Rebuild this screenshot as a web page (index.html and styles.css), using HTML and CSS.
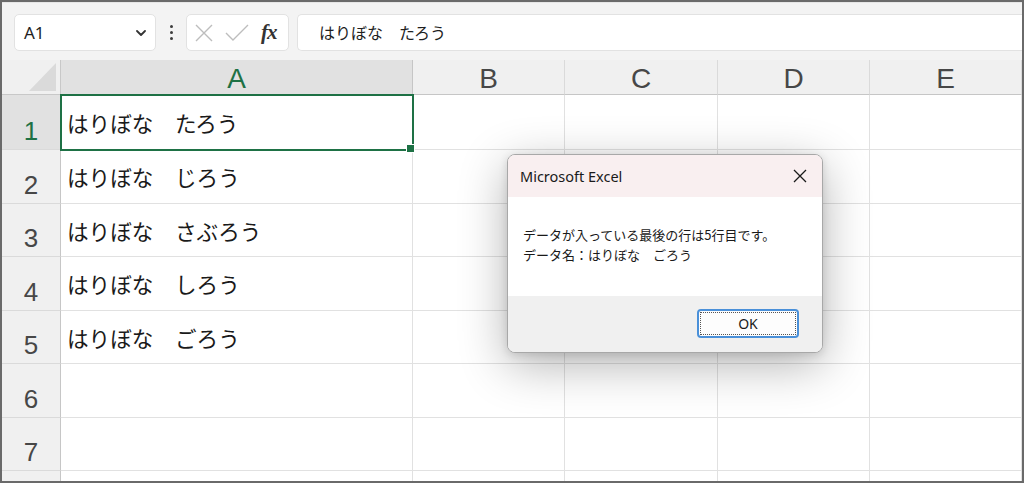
FILE: index.html
```html
<!DOCTYPE html>
<html lang="ja">
<head>
<meta charset="utf-8">
<title>Excel</title>
<link rel="stylesheet" href="styles.css">
</head>
<body>
<div class="frame">
  <div class="formula-bar">
    <div class="name-box">
      <span class="name-text">A1</span>
      <svg class="chev" width="10" height="6" viewBox="0 0 10 6"><path d="M1 1 L5 5 L9 1" fill="none" stroke="#333" stroke-width="1.8" stroke-linecap="round" stroke-linejoin="round"/></svg>
    </div>
    <div class="dots"><i></i><i></i><i></i></div>
    <div class="fx-buttons">
      <svg class="ico-x" width="18" height="18" viewBox="0 0 18 18"><path d="M1 1 L17 17 M17 1 L1 17" stroke="#bdbdbd" stroke-width="1.4" fill="none"/></svg>
      <svg class="ico-check" width="24" height="18" viewBox="0 0 24 18"><path d="M1 9 L8 16 L23 1" stroke="#bdbdbd" stroke-width="1.4" fill="none"/></svg>
      <span class="fx"><i>f</i><i>x</i></span>
    </div>
    <div class="formula-input">はりぼな　たろう</div>
  </div>

  <div class="sheet">
    <div class="grid">
      <div class="corner"><div class="tri"></div></div>
      <div class="ch sel-h">A</div>
      <div class="ch">B</div>
      <div class="ch">C</div>
      <div class="ch">D</div>
      <div class="ch">E</div>

      <div class="rh sel-h">1</div>
      <div class="cell a1">はりぼな　たろう</div>
      <div class="cell"></div><div class="cell"></div><div class="cell"></div><div class="cell"></div>

      <div class="rh">2</div>
      <div class="cell">はりぼな　じろう</div>
      <div class="cell"></div><div class="cell"></div><div class="cell"></div><div class="cell"></div>

      <div class="rh">3</div>
      <div class="cell">はりぼな　さぶろう</div>
      <div class="cell"></div><div class="cell"></div><div class="cell"></div><div class="cell"></div>

      <div class="rh">4</div>
      <div class="cell">はりぼな　しろう</div>
      <div class="cell"></div><div class="cell"></div><div class="cell"></div><div class="cell"></div>

      <div class="rh">5</div>
      <div class="cell">はりぼな　ごろう</div>
      <div class="cell"></div><div class="cell"></div><div class="cell"></div><div class="cell"></div>

      <div class="rh">6</div>
      <div class="cell"></div>
      <div class="cell"></div><div class="cell"></div><div class="cell"></div><div class="cell"></div>

      <div class="rh">7</div>
      <div class="cell"></div>
      <div class="cell"></div><div class="cell"></div><div class="cell"></div><div class="cell"></div>

      <div class="rh"></div>
      <div class="cell"></div>
      <div class="cell"></div><div class="cell"></div><div class="cell"></div><div class="cell"></div>
    </div>

    <div class="dialog">
      <div class="dlg-title">
        <span>Microsoft Excel</span>
        <svg class="dlg-close" width="14" height="14" viewBox="0 0 14 14"><path d="M1 1 L13 13 M13 1 L1 13" stroke="#1a1a1a" stroke-width="1.3" fill="none"/></svg>
      </div>
      <div class="dlg-body">
        <div>データが入っている最後の行は5行目です。</div>
        <div>データ名：はりぼな　ごろう</div>
      </div>
      <div class="dlg-foot">
        <button class="ok"><span>OK</span></button>
      </div>
    </div>
  </div>
</div>
</body>
</html>
```

FILE: styles.css
```css
* { box-sizing: border-box; }
html, body { margin: 0; padding: 0; }
body {
  width: 1024px;
  height: 483px;
  overflow: hidden;
  font-family: "Noto Sans", "Noto Sans CJK JP", sans-serif;
  background: #ffffff;
}
.frame {
  width: 1024px;
  height: 483px;
  border: 2px solid #6a6a6a;
  background: #f3f3f3;
  display: flex;
  flex-direction: column;
  overflow: hidden;
}
.formula-bar {
  height: 58px;
  flex: none;
  display: flex;
  align-items: flex-start;
  padding-top: 11px;
  padding-left: 12px;
  border-top: 1px solid #e6e6e6;
}
.name-box {
  width: 142px;
  height: 37px;
  background: #fff;
  border: 1px solid #e2e2e2;
  border-radius: 5px;
  display: flex;
  align-items: center;
  justify-content: space-between;
  padding: 0 9px 0 9px;
}
.name-text {
  font-family: "Noto Sans", sans-serif;
  font-size: 17px;
  color: #1f1f1f;
}
.chev { margin-top: 1px; }
.dots {
  width: 30px;
  height: 37px;
  display: flex;
  flex-direction: column;
  align-items: center;
  justify-content: center;
  gap: 3px;
}
.dots i {
  display: block;
  width: 3px;
  height: 3px;
  border-radius: 50%;
  background: #3c3c3c;
}
.fx-buttons {
  width: 103px;
  height: 37px;
  background: #fff;
  border: 1px solid #e2e2e2;
  border-radius: 5px;
  display: flex;
  align-items: center;
  padding-left: 8px;
}
.ico-x { margin-right: 12px; }
.ico-check { margin-right: 12px; }
.fx {
  font-family: "Liberation Serif", serif;
  font-size: 21px;
  font-weight: bold;
  color: #333;
  letter-spacing: -1px;
}
.formula-input {
  flex: 1;
  height: 37px;
  margin-left: 8px;
  background: #fff;
  border: 1px solid #e2e2e2;
  border-right: none;
  border-radius: 5px 0 0 5px;
  font-family: "Noto Sans CJK JP", sans-serif;
  font-size: 16px;
  color: #1f1f1f;
  line-height: 35px;
  padding-left: 21px;
}

.sheet {
  flex: 1;
  position: relative;
  background: #fff;
}
.grid {
  display: grid;
  grid-template-columns: 59px 352px 152px 153px 152px 152px;
  grid-template-rows: 35px 55px 54px 53px 54px 53px 54px 53px 20px;
}
.corner {
  background: #f0f0f0;
  border-right: 1px solid #c8c8c8;
  border-bottom: 1px solid #c8c8c8;
  display: flex;
  align-items: flex-end;
  justify-content: flex-end;
  padding: 0 4px 3px 0;
}
.tri {
  width: 27px;
  height: 28px;
  background: #dadada;
  clip-path: polygon(100% 0, 100% 100%, 0 100%);
}
.ch {
  background: #f0f0f0;
  border-right: 1px solid #dadada;
  border-bottom: 1px solid #c6c6c6;
  font-family: "Liberation Sans", sans-serif;
  font-size: 28px;
  line-height: 28px;
  color: #474747;
  display: flex;
  align-items: center;
  justify-content: center;
  padding-top: 4px;
}
.ch.sel-h {
  background: #e1e1e1;
  color: #1e7145;
  border-right-color: #c6c6c6;
}
.rh {
  background: #f0f0f0;
  border-right: 1px solid #c6c6c6;
  border-bottom: 1px solid #dadada;
  font-family: "Liberation Sans", sans-serif;
  font-size: 26px;
  line-height: 26px;
  color: #474747;
  display: flex;
  align-items: flex-end;
  justify-content: center;
  padding-bottom: 5px;
}
.rh.sel-h {
  background: #e1e1e1;
  color: #1e7145;
}
.cell {
  border-right: 1px solid #e1e1e1;
  border-bottom: 1px solid #e1e1e1;
  font-family: "Noto Sans CJK JP", sans-serif;
  font-size: 21.6px;
  color: #1a1a1a;
  display: flex;
  align-items: center;
  padding-left: 6px;
  white-space: nowrap;
}
.a1 { position: relative; }
.a1::after {
  content: "";
  position: absolute;
  top: -1px;
  left: -1px;
  right: -2px;
  bottom: -2px;
  border: 2px solid #1e7145;
}
.a1::before {
  content: "";
  position: absolute;
  right: -3px;
  bottom: -4px;
  width: 7px;
  height: 7px;
  background: #1e7145;
  border: 1px solid #fff;
  z-index: 2;
}

.dialog {
  position: absolute;
  left: 505px;
  top: 94px;
  width: 316px;
  height: 199px;
  border: 1px solid #a8a8a8;
  border-radius: 8px;
  overflow: hidden;
  box-shadow: 0 12px 48px rgba(0,0,0,0.30), 0 2px 8px rgba(0,0,0,0.12);
  display: flex;
  flex-direction: column;
  background: #fff;
}
.dlg-title {
  height: 42px;
  flex: none;
  background: #f9eff0;
  display: flex;
  align-items: center;
  justify-content: space-between;
  padding: 0 15px 0 12px;
  font-family: "Noto Sans", sans-serif;
  font-size: 14.5px;
  color: #1a1a1a;
}
.dlg-body {
  height: 99px;
  flex: none;
  background: #fff;
  padding: 28px 0 0 15px;
  font-family: "Noto Sans CJK JP", sans-serif;
  font-size: 13px;
  line-height: 20px;
  color: #1a1a1a;
}
.dlg-foot {
  flex: 1;
  background: #f0f0f0;
  display: flex;
  justify-content: flex-end;
  align-items: flex-start;
  padding: 13px 23px 0 0;
}
.ok {
  width: 102px;
  height: 29px;
  border: 2px solid #4a90d9;
  border-radius: 4px;
  background: #fdfdfd;
  padding: 1px;
  font-family: "Noto Sans", sans-serif;
  font-size: 14px;
  color: #1a1a1a;
}
.ok span {
  display: flex;
  align-items: center;
  justify-content: center;
  width: 100%;
  height: 100%;
  border: 1px dotted #555;
}
```
